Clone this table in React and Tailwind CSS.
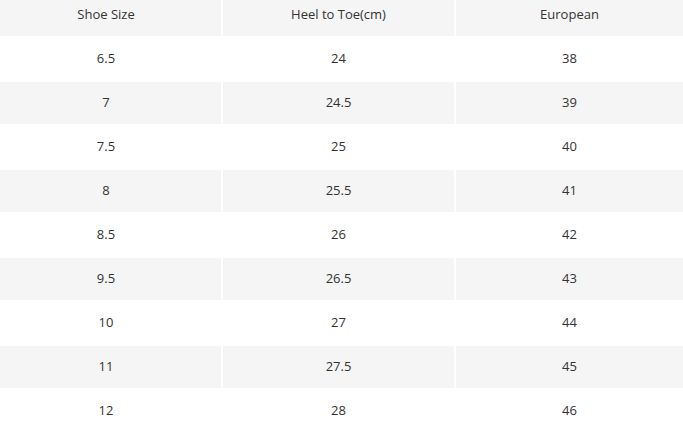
import React from 'react';

const rows = [
  ['6.5', '24', '38'],
  ['7', '24.5', '39'],
  ['7.5', '25', '40'],
  ['8', '25.5', '41'],
  ['8.5', '26', '42'],
  ['9.5', '26.5', '43'],
  ['10', '27', '44'],
  ['11', '27.5', '45'],
  ['12', '28', '46'],
];

const App = () => {
  return (
    <div className="w-[683px] h-[435px] overflow-hidden bg-white text-[13px] text-[#333] font-['Open_Sans',sans-serif]">
      <div className="ml-[-9px] grid grid-cols-[230px_231px_1fr] gap-[2px]">
        {['Shoe Size', 'Heel to Toe(cm)', 'European'].map((h) => (
          <div key={h} className="h-[36px] flex items-center justify-center pb-[6px] bg-[#f5f5f5]">{h}</div>
        ))}
        {rows.map((r, i) =>
          r.map((c, j) => (
            <div
              key={i + '-' + j}
              className={`h-[42px] flex items-center justify-center ${i % 2 === 1 ? 'bg-[#f5f5f5]' : 'bg-white'}`}
            >
              {c}
            </div>
          ))
        )}
      </div>
    </div>
  );
};

export default App;
